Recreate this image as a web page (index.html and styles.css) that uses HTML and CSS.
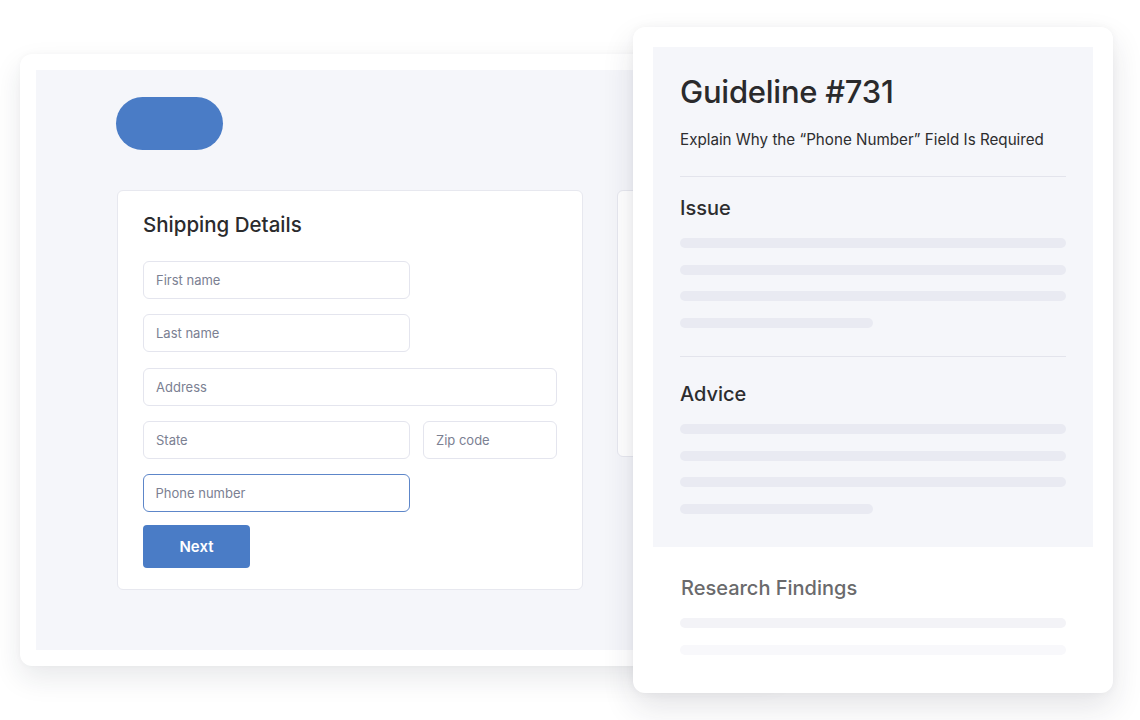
FILE: index.html
```html
<!DOCTYPE html>
<html>
<head>
<meta charset="utf-8">
<link rel="stylesheet" href="styles.css">
</head>
<body>
<div class="stage">
  <div class="back">
    <div class="inner">
      <div class="pill"></div>
      <div class="cards">
        <div class="form-card">
          <h2 class="form-title">Shipping Details</h2>
          <div class="fields">
            <div class="row"><div class="field w267">First name</div></div>
            <div class="row"><div class="field w267">Last name</div></div>
            <div class="row"><div class="field w414">Address</div></div>
            <div class="row"><div class="field w267">State</div><div class="field w134">Zip code</div></div>
            <div class="row"><div class="field w267 focus">Phone number</div></div>
          </div>
          <div class="btn">Next</div>
        </div>
        <div class="side-card"></div>
      </div>
    </div>
  </div>

  <div class="panel">
    <div class="grey">
      <h1 class="g-title">Guideline #731</h1>
      <p class="g-sub">Explain Why the “Phone Number” Field Is Required</p>
      <div class="divider first"></div>
      <h3 class="sec-title issue">Issue</h3>
      <div class="bars">
        <div class="bar"></div>
        <div class="bar"></div>
        <div class="bar"></div>
        <div class="bar short"></div>
      </div>
      <div class="divider second"></div>
      <h3 class="sec-title advice">Advice</h3>
      <div class="bars">
        <div class="bar"></div>
        <div class="bar"></div>
        <div class="bar"></div>
        <div class="bar short"></div>
      </div>
    </div>
    <div class="research">
      <h3 class="sec-title muted">Research Findings</h3>
      <div class="bars">
        <div class="bar light"></div>
        <div class="bar lighter"></div>
      </div>
    </div>
  </div>
</div>
</body>
</html>
```

FILE: styles.css
```css
* { box-sizing: border-box; }
html, body {
  margin: 0;
  padding: 0;
  background: #ffffff;
  width: 1140px;
  height: 720px;
  overflow: hidden;
  font-family: Inter, "Open Sans", sans-serif;
  color: #2d2d2f;
}
.stage {
  position: relative;
  width: 1140px;
  height: 720px;
  padding-top: 54px;
  padding-left: 20px;
}
.back {
  width: 760px;
  height: 612px;
  background: #ffffff;
  border-radius: 12px;
  padding: 16px;
  box-shadow: 0 12px 28px rgba(30, 35, 60, 0.10), 0 0 6px rgba(30, 35, 60, 0.03);
}
.inner {
  background: #f5f6fa;
  height: 580px;
  padding: 27px 0 0 80px;
}
.pill {
  width: 107px;
  height: 53px;
  border-radius: 27px;
  background: #4a7cc6;
}
.cards {
  display: flex;
  gap: 34px;
  margin-top: 40px;
  margin-left: 1px;
  align-items: flex-start;
}
.form-card {
  flex-shrink: 0;
  width: 466px;
  height: 400px;
  background: #ffffff;
  border: 1px solid #e7e8ef;
  border-radius: 6px;
  padding: 21px 25px 0 25px;
}
.side-card {
  flex-shrink: 0;
  width: 200px;
  height: 267px;
  background: #ffffff;
  border: 1px solid #e7e8ef;
  border-radius: 6px;
}
.form-title {
  margin: 0;
  font-size: 20.5px;
  font-weight: 500;
  line-height: 26px;
  color: #2b2b2d;
}
.fields {
  display: flex;
  flex-direction: column;
  gap: 15.25px;
  margin-top: 23px;
}
.row {
  display: flex;
  gap: 13px;
}
.field {
  height: 38px;
  border: 1px solid #e4e5ee;
  border-radius: 6px;
  background: #ffffff;
  padding: 0 12px;
  display: flex;
  align-items: center;
  font-size: 13px;
  color: #7b8092;
}
.w267 { width: 267px; }
.w414 { width: 414px; }
.w134 { width: 134px; }
.field.focus {
  border: 1.5px solid #5d86c9;
  padding: 0 11.5px;
}
.btn {
  margin-top: 13px;
  width: 107px;
  height: 43px;
  border-radius: 4px;
  background: #4a7cc6;
  color: #ffffff;
  font-size: 15px;
  font-weight: 600;
  display: flex;
  align-items: center;
  justify-content: center;
}
.panel {
  position: absolute;
  left: 633px;
  top: 27px;
  width: 480px;
  height: 666px;
  background: #ffffff;
  border-radius: 12px;
  padding: 20px;
  box-shadow: 0 14px 32px rgba(30, 35, 60, 0.12), 0 0 8px rgba(30, 35, 60, 0.04);
}
.grey {
  background: #f5f6fa;
  height: 500px;
  padding: 26px 27px 0 27px;
}
.g-title {
  margin: 0;
  font-size: 31px;
  font-weight: 500;
  line-height: 38px;
  color: #2a2a2c;
  letter-spacing: -0.25px;
}
.g-sub {
  margin: 19px 0 0 0;
  font-size: 15.2px;
  line-height: 20px;
  color: #2d2d2f;
}
.divider {
  height: 1px;
  background: #e3e4ec;
}
.divider.first { margin-top: 26px; }
.divider.second { margin-top: 28px; }
.sec-title {
  margin: 0;
  font-size: 20px;
  font-weight: 500;
  line-height: 26px;
  color: #2d2d2f;
}
.sec-title.issue { margin-top: 18px; }
.sec-title.advice { margin-top: 24px; }
.bars {
  display: flex;
  flex-direction: column;
  gap: 16.7px;
  margin-top: 17px;
}
.bar {
  height: 10px;
  border-radius: 5px;
  background: #e9eaf2;
}
.bar.short { width: 193px; }
.bar.light { background: #f3f3f7; }
.bar.lighter { background: #f8f8fb; }
.research {
  padding: 28px 27px 0 28px;
}
.research .bars { margin-top: 17px; margin-left: -1px; }
.sec-title.muted {
  color: #6a6a6c;
}
```
